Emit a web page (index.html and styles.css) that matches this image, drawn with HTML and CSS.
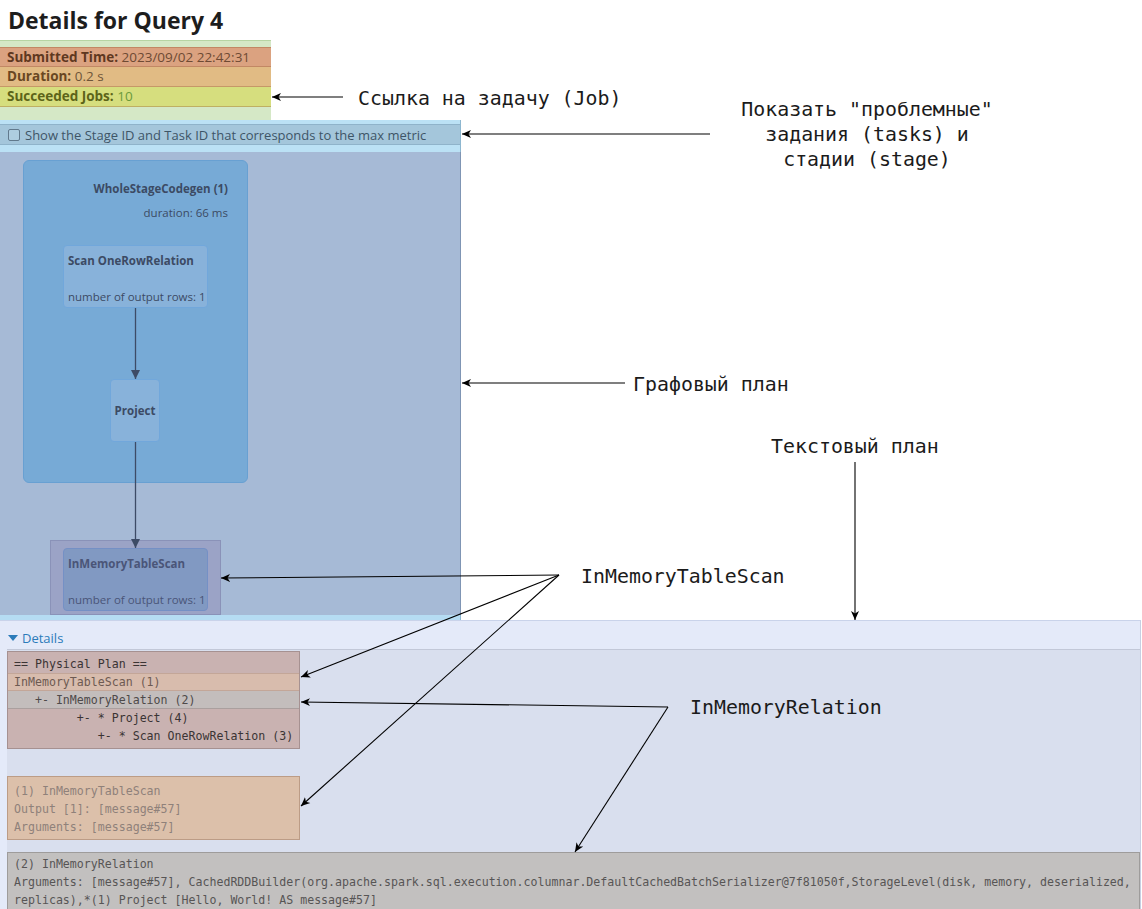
FILE: index.html
```html
<!DOCTYPE html>
<html lang="en">

<head>
    <meta charset="UTF-8" />
    <title>Details for Query 4</title>
    <link rel="stylesheet" href="styles.css">
</head>

<body>
    <div class="page">
        <h1 class="title">Details for Query 4</h1>

        <div class="summary">
            <div class="summary-row row-submitted"><b>Submitted Time:</b> 2023/09/02 22:42:31</div>
            <div class="summary-row row-duration"><b>Duration:</b> 0.2 s</div>
            <div class="summary-row row-jobs"><b>Succeeded Jobs:</b> <span class="job-link">10</span></div>
        </div>

        <div class="metric-toggle">
            <label class="metric-row"><span class="checkbox"></span>Show the Stage ID and Task ID that corresponds to the max metric</label>
        </div>

        <div class="plan-graph">
            <div class="cluster">
                <div class="cluster-name">WholeStageCodegen (1)</div>
                <div class="cluster-duration">duration: 66 ms</div>
            </div>
            <div class="node node-scan">
                <div class="node-name">Scan OneRowRelation</div>
                <div class="node-metric">number of output rows: 1</div>
            </div>
            <div class="node node-project">
                <div class="node-name">Project</div>
            </div>
            <div class="node-highlight"></div>
            <div class="node node-memory">
                <div class="node-name">InMemoryTableScan</div>
                <div class="node-metric">number of output rows: 1</div>
            </div>
            <svg class="edges" width="461" height="463">
                <defs>
                    <marker id="edge-head" markerWidth="10" markerHeight="10" refX="9" refY="5" orient="auto" markerUnits="userSpaceOnUse">
                        <path d="M0,0.5 L9,5 L0,9.5 z" fill="#3d4b66" />
                    </marker>
                </defs>
                <line x1="135.5" y1="156" x2="135.5" y2="227" stroke="#3d4b66" stroke-width="1.3" marker-end="url(#edge-head)" />
                <line x1="135.5" y1="290" x2="135.5" y2="396" stroke="#3d4b66" stroke-width="1.3" marker-end="url(#edge-head)" />
            </svg>
        </div>
        <div class="graph-foot"></div>

        <div class="details">
            <div class="details-toggle"><span class="caret"></span>Details</div>
            <div class="details-body">
                <div class="plan-tree">
                    <div class="plan-line">== Physical Plan ==</div>
                    <div class="plan-line hl-scan">InMemoryTableScan (1)</div>
                    <div class="plan-line hl-relation">   +- InMemoryRelation (2)</div>
                    <div class="plan-line">         +- * Project (4)</div>
                    <div class="plan-line">            +- * Scan OneRowRelation (3)</div>
                </div>
                <pre class="node-desc desc-scan">(1) InMemoryTableScan
Output [1]: [message#57]
Arguments: [message#57]</pre>
                <pre class="node-desc desc-relation">(2) InMemoryRelation
Arguments: [message#57], CachedRDDBuilder(org.apache.spark.sql.execution.columnar.DefaultCachedBatchSerializer@7f81050f,StorageLevel(disk, memory, deserialized,
replicas),*(1) Project [Hello, World! AS message#57]</pre>
            </div>
        </div>
    </div>

    <div class="notes">
        <svg class="note-arrows" width="1142" height="909">
            <defs>
                <marker id="note-head" markerWidth="10" markerHeight="10" refX="9" refY="5" orient="auto" markerUnits="userSpaceOnUse">
                    <path d="M0,1 L9,5 L0,9 L2.5,5 z" fill="#000" />
                </marker>
            </defs>
            <g stroke="#000" stroke-width="1.1" fill="none" marker-end="url(#note-head)">
                <line x1="343" y1="97" x2="272" y2="97" />
                <line x1="710" y1="134" x2="462" y2="134" />
                <line x1="625" y1="383" x2="462" y2="383" />
                <line x1="855" y1="462" x2="855" y2="620" />
                <line x1="559" y1="575" x2="221" y2="578" />
                <line x1="559" y1="575" x2="301" y2="677" />
                <line x1="559" y1="575" x2="301" y2="806" />
                <line x1="668" y1="707" x2="301" y2="702" />
                <line x1="668" y1="707" x2="575" y2="852" />
            </g>
        </svg>
        <div class="note note-job">Ссылка на задачу (Job)</div>
        <div class="note note-stage">Показать "проблемные"<br>задания (tasks) и<br>стадии (stage)</div>
        <div class="note note-graph">Графовый план</div>
        <div class="note note-text">Текстовый план</div>
        <div class="note note-scan">InMemoryTableScan</div>
        <div class="note note-relation">InMemoryRelation</div>
    </div>
</body>

</html>
```

FILE: styles.css
```css
* {
    box-sizing: border-box;
    margin: 0;
    padding: 0;
}

body {
    position: relative;
    width: 1142px;
    height: 909px;
    overflow: hidden;
    background: #fff;
    font-family: 'Open Sans', sans-serif;
    font-size: 13px;
    color: #333;
}

.title {
    height: 40px;
    padding: 3px 8px 0;
    font-size: 23px;
    font-weight: 700;
    line-height: 34px;
    color: #1d1d1d;
}

/* summary */

.summary {
    width: 271px;
    padding: 6px 0 13px;
    background: #d5e8c6;
    border-top: 1px solid #b7d4a3;
    font-size: 13.5px;
}

.summary-row {
    height: 20px;
    padding-left: 7px;
    line-height: 19px;
    border-bottom: 1px solid rgba(150, 90, 50, 0.35);
    white-space: nowrap;
}

.row-submitted {
    background: #dba280;
    color: #6e4a33;
    border-top: 1px solid rgba(150, 90, 50, 0.35);
}

.row-submitted b {
    color: #5f381f;
}

.row-duration {
    background: #e1bb84;
    color: #6e5538;
}

.row-duration b {
    color: #694722;
}

.row-jobs {
    background: #d6de7e;
    color: #5d6419;
}

.job-link {
    color: #6a9a3c;
}

/* metric toggle */

.metric-toggle {
    width: 461px;
    padding: 4px 0 7px;
    background: #bbe1f5;
    border-right: 1px solid #8db7d0;
}

.metric-row {
    display: flex;
    align-items: center;
    gap: 5px;
    height: 21px;
    padding-left: 8px;
    background: #a4c6db;
    border-top: 1px solid #8fb3ca;
    border-bottom: 1px solid #8fb3ca;
    color: #3e5567;
    white-space: nowrap;
}

.checkbox {
    width: 12px;
    height: 12px;
    border: 1px solid #61798c;
    border-radius: 2px;
    background: #aecde0;
}

/* graph */

.plan-graph {
    position: relative;
    width: 461px;
    height: 463px;
    background: #a6bad6;
    border-right: 1px solid #7f95b4;
    color: #3c4a64;
    font-size: 11.5px;
}

.cluster {
    position: absolute;
    left: 23px;
    top: 8px;
    width: 225px;
    height: 323px;
    padding: 19px 19px 0 0;
    background: #77aad6;
    border: 1px solid #68a0d2;
    border-radius: 6px;
    text-align: right;
}

.cluster-name {
    font-weight: 700;
    line-height: 17px;
}

.cluster-duration {
    margin-top: 7px;
    line-height: 17px;
}

.node {
    position: absolute;
    width: 145px;
    height: 63px;
    background: #88b2da;
    border: 1px solid #71a7db;
    border-radius: 4px;
    padding: 6px 0 0 4px;
    white-space: nowrap;
}

.node-name {
    font-weight: 700;
    line-height: 17px;
}

.node-metric {
    margin-top: 19px;
    line-height: 17px;
}

.node-scan {
    left: 63px;
    top: 93px;
}

.node-project {
    left: 110px;
    top: 227px;
    width: 50px;
    display: flex;
    align-items: center;
    justify-content: center;
    padding: 0;
}

.node-highlight {
    position: absolute;
    left: 50px;
    top: 388px;
    width: 171px;
    height: 75px;
    background: #9ba3c6;
    border: 1px solid #8a92b8;
}

.node-memory {
    left: 63px;
    top: 396px;
    background: #8199c2;
    border-color: #7590c5;
    color: #4a5578;
}

.edges {
    position: absolute;
    left: 0;
    top: 0;
}

.graph-foot {
    width: 461px;
    height: 5px;
    background: #b5dcf3;
    border-right: 1px solid #8db7d0;
}

/* details */

.details {
    width: 1141px;
    height: 300px;
    background: #e4eaf9;
    border-right: 1px solid #c7cfe2;
    border-top: 1px solid #c9d3ea;
}

.details-toggle {
    display: flex;
    align-items: center;
    gap: 4px;
    height: 28px;
    padding: 6px 0 0 8px;
    color: #2b7bb9;
    font-size: 13px;
}

.caret {
    width: 0;
    height: 0;
    border-left: 5px solid transparent;
    border-right: 5px solid transparent;
    border-top: 6px solid #2b7bb9;
}

.details-body {
    margin-left: 7px;
    height: 270px;
    padding-top: 1px;
    background: #d9dfee;
    border-top: 1px solid #c2c8d8;
}

.plan-tree,
.node-desc {
    font-family: 'DejaVu Sans Mono', monospace;
    font-size: 11.6px;
    line-height: 18px;
}

.plan-tree {
    width: 293px;
    padding: 3px 0;
    background: #c9b2b1;
    border: 1px solid #a69191;
    color: #3a3434;
}

.plan-line {
    height: 18px;
    padding-left: 6px;
    white-space: pre;
}

.hl-scan {
    background: #d8bcad;
    color: #6d5a52;
    box-shadow: inset 0 1px 0 #c3a698, inset 0 -1px 0 #c3a698;
}

.hl-relation {
    background: #c3bdbc;
    color: #4e4a4a;
    box-shadow: inset 0 -1px 0 #aa9f9e;
}

.node-desc {
    padding: 5px 6px 3px;
    white-space: pre;
}

.desc-scan {
    width: 293px;
    margin-top: 27px;
    background: #dcc0aa;
    border: 1px solid #bc9c86;
    color: #8f817a;
}

.desc-relation {
    margin-top: 12px;
    padding-top: 2px;
    padding-bottom: 0;
    background: #c2c0bf;
    border: 1px solid #9e9c9b;
    color: #575555;
}

/* annotations on top of the screenshot */

.notes {
    position: absolute;
    left: 0;
    top: 0;
    width: 1142px;
    height: 909px;
    pointer-events: none;
}

.note-arrows {
    position: absolute;
    left: 0;
    top: 0;
}

.note {
    position: absolute;
    font-family: 'DejaVu Sans Mono', monospace;
    font-size: 19.9px;
    line-height: 25px;
    color: #1b1b1b;
    white-space: nowrap;
}

.note-job {
    left: 358px;
    top: 86px;
}

.note-stage {
    left: 717px;
    top: 97px;
    width: 300px;
    text-align: center;
}

.note-graph {
    left: 633px;
    top: 372px;
}

.note-text {
    left: 771px;
    top: 434px;
}

.note-scan {
    left: 581px;
    top: 564px;
}

.note-relation {
    left: 690px;
    top: 695px;
}
```
